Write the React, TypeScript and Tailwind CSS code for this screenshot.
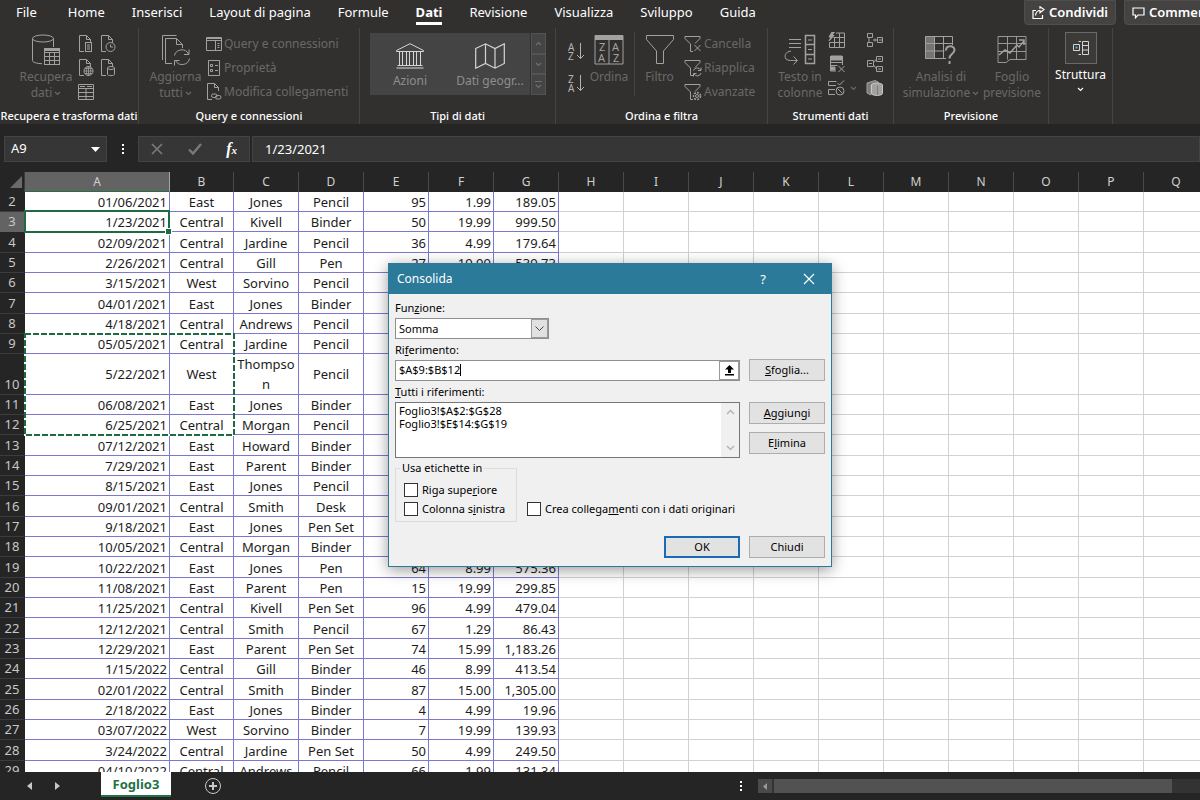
import { ReactNode } from 'react';
import clsx from 'clsx';

const TABS = ['File', 'Home', 'Inserisci', 'Layout di pagina', 'Formule', 'Dati', 'Revisione', 'Visualizza', 'Sviluppo', 'Guida'];

const COLUMNS = 'ABCDEFGHIJKLMNOPQ'.split('');
const EMPTY_COLUMNS = COLUMNS.slice(7);

const ROWS: string[][] = [
  ['01/06/2021', 'East', 'Jones', 'Pencil', '95', '1.99', '189.05'],
  ['1/23/2021', 'Central', 'Kivell', 'Binder', '50', '19.99', '999.50'],
  ['02/09/2021', 'Central', 'Jardine', 'Pencil', '36', '4.99', '179.64'],
  ['2/26/2021', 'Central', 'Gill', 'Pen', '27', '19.99', '539.73'],
  ['3/15/2021', 'West', 'Sorvino', 'Pencil', '56', '2.99', '167.44'],
  ['04/01/2021', 'East', 'Jones', 'Binder', '60', '4.99', '299.40'],
  ['4/18/2021', 'Central', 'Andrews', 'Pencil', '75', '1.99', '149.25'],
  ['05/05/2021', 'Central', 'Jardine', 'Pencil', '90', '4.99', '449.10'],
  ['5/22/2021', 'West', 'Thompson', 'Pencil', '32', '1.99', '63.68'],
  ['06/08/2021', 'East', 'Jones', 'Binder', '60', '8.99', '539.40'],
  ['6/25/2021', 'Central', 'Morgan', 'Pencil', '90', '4.99', '449.10'],
  ['07/12/2021', 'East', 'Howard', 'Binder', '29', '1.99', '57.71'],
  ['7/29/2021', 'East', 'Parent', 'Binder', '81', '19.99', '1,619.19'],
  ['8/15/2021', 'East', 'Jones', 'Pencil', '35', '4.99', '174.65'],
  ['09/01/2021', 'Central', 'Smith', 'Desk', '2', '125.00', '250.00'],
  ['9/18/2021', 'East', 'Jones', 'Pen Set', '16', '15.99', '255.84'],
  ['10/05/2021', 'Central', 'Morgan', 'Binder', '28', '8.99', '251.72'],
  ['10/22/2021', 'East', 'Jones', 'Pen', '64', '8.99', '575.36'],
  ['11/08/2021', 'East', 'Parent', 'Pen', '15', '19.99', '299.85'],
  ['11/25/2021', 'Central', 'Kivell', 'Pen Set', '96', '4.99', '479.04'],
  ['12/12/2021', 'Central', 'Smith', 'Pencil', '67', '1.29', '86.43'],
  ['12/29/2021', 'East', 'Parent', 'Pen Set', '74', '15.99', '1,183.26'],
  ['1/15/2022', 'Central', 'Gill', 'Binder', '46', '8.99', '413.54'],
  ['02/01/2022', 'Central', 'Smith', 'Binder', '87', '15.00', '1,305.00'],
  ['2/18/2022', 'East', 'Jones', 'Binder', '4', '4.99', '19.96'],
  ['03/07/2022', 'West', 'Sorvino', 'Binder', '7', '19.99', '139.93'],
  ['3/24/2022', 'Central', 'Jardine', 'Pen Set', '50', '4.99', '249.50'],
  ['04/10/2022', 'Central', 'Andrews', 'Pencil', '66', '1.99', '131.34'],
];

/* ---------- icons ---------- */

function Icon({ w, h, className, children }: { w: number; h: number; className?: string; children: ReactNode }) {
  return (
    <svg width={w} height={h} viewBox={`0 0 ${w} ${h}`} fill="none" stroke="currentColor" className={clsx('shrink-0', className)} aria-hidden="true">
      {children}
    </svg>
  );
}

const DatabaseIcon = () => (
  <Icon w={28} h={32}>
    <ellipse cx="11" cy="4.5" rx="10.5" ry="3.5" />
    <path d="M.5 4.5v22c0 1.800 4 3 9.500 3.200M21.500 4.500V13" />
    <rect x="12.500" y="14.500" width="15" height="16" fill="#31302f" />
    <path d="M12.500 18.500h15M12.500 22.500h15M12.500 26.500h15M17.500 18v12.500M22.500 18v12.500" />
    <path d="M12.500 16h15" strokeWidth="2" />
  </Icon>
);

function DocIcon({ children }: { children?: ReactNode }) {
  return (
    <Icon w={16} h={18}>
      <path d="M6 16.500H1.500V.500h7l4 4V8M8.500.500v4h4" />
      {children}
    </Icon>
  );
}

const DocTextIcon = () => (
  <DocIcon>
    <rect x="7.500" y="7.500" width="6" height="9" fill="#31302f" />
    <path d="M9 10h3M9 12h3M9 14h3" />
  </DocIcon>
);
const DocClockIcon = () => (
  <DocIcon>
    <circle cx="10.500" cy="12" r="4.500" fill="#31302f" />
    <path d="M10.500 9.500V12h2.500" />
  </DocIcon>
);
const DocGlobeIcon = () => (
  <DocIcon>
    <circle cx="10.500" cy="12" r="4.500" fill="#31302f" />
    <path d="M6 12h9M10.500 7.500v9M7 9.500h7M7 14.500h7" strokeWidth=".8" />
    <ellipse cx="10.500" cy="12" rx="2.200" ry="4.500" strokeWidth=".8" />
  </DocIcon>
);
const DocDbIcon = () => (
  <DocIcon>
    <path d="M7.500 9v6.500c0 1.500 7 1.500 7 0V9" fill="#31302f" />
    <ellipse cx="11" cy="9" rx="3.500" ry="1.500" fill="#31302f" />
  </DocIcon>
);
const DocLinkIcon = () => (
  <DocIcon>
    <rect x="5.500" y="11" width="5.500" height="3.500" rx="1.700" fill="#31302f" />
    <rect x="9.500" y="12.500" width="5.500" height="3.500" rx="1.700" />
  </DocIcon>
);
const TableIcon = () => (
  <Icon w={16} h={16}>
    <path d="M.500.500h15v15H.500zM.500 4.500h15M.500 8.500h15M.500 12.500h15M8 4.500v11" />
    <path d="M2 2.500h5M9 2.500h5" />
  </Icon>
);
const RefreshAllIcon = () => (
  <Icon w={28} h={32}>
    <path d="M.500 26V1.500h14" />
    <path d="M10 29.500H3.500V4.500h11l6 6V14M14.500 4.500v6h6" />
    <path d="M12.500 21.500a7.500 7.500 0 0 1 14-1.500M27.500 24.500a7.500 7.500 0 0 1-14 2M27 15.500v5h-5M12.500 31.500v-5h5" />
  </Icon>
);
const QueryPaneIcon = () => (
  <Icon w={16} h={16}>
    <path d="M.500 1.500h15v13H.500zM.500 4.500h15M9.500 4.500v10" />
    <path d="M.500 2.500h15M11.500 7.500h2M11.500 9.500h2M11.500 11.500h2" />
  </Icon>
);
const PropertiesIcon = () => (
  <Icon w={16} h={16}>
    <path d="M2.500.500h11v15h-11z" />
    <path d="M4.500 4.500h2v2h-2zM4.500 9.500h2v2h-2zM9 5.500h3M9 10.500h3" />
  </Icon>
);
const BankIcon = () => (
  <Icon w={28} h={26}>
    <path d="M.500 7.500 14 .700l13.500 6.800v1h-27zM1.500 22.500h25M.500 25h27" />
    <path d="M3.500 9v13.500M6.500 9v13.500M10.500 9v13.500M13.500 9v13.500M17.500 9v13.500M20.500 9v13.500M24.500 9v13.500" />
  </Icon>
);
const MapIcon = () => (
  <Icon w={30} h={26}>
    <path d="M.700 5.500 10.500.800l9.500 4.700 9.300-4.700v19.700L20 25.200l-9.500-4.700-9.800 4.700zM10.500.800v19.700M20 5.500v19.700" strokeWidth="1.200" />
  </Icon>
);

function SortIcon({ first, last }: { first: string; last: string }) {
  return (
    <Icon w={18} h={24}>
      <text x="1" y="11" fontSize="10" fill="currentColor" stroke="none">{first}</text>
      <text x="1" y="20" fontSize="10" fill="currentColor" stroke="none">{last}</text>
      <path d="M13.500 3v15.500M10 15l3.500 3.500L17 15" />
    </Icon>
  );
}

const SortDialogIcon = () => (
  <Icon w={30} h={30}>
    <path d="M1 .500h28v28.500H1zM15 5v24" />
    <path d="M1 3h28" strokeWidth="4" />
    <g fill="currentColor" stroke="none" fontSize="11">
      <text x="5" y="16">Z</text>
      <text x="4" y="27">A</text>
      <text x="18" y="16">A</text>
      <text x="19" y="27">Z</text>
    </g>
  </Icon>
);
const FunnelIcon = () => (
  <Icon w={30} h={32}>
    <path d="M1.500 1.500h27v4L18.500 17v12.500h-7V17L1.500 5.500z" />
  </Icon>
);

function SmallFunnelIcon({ children }: { children: ReactNode }) {
  return (
    <Icon w={18} h={18}>
      <path d="M9 16.500H6.500V9L1 3.500v-2h15v2L11 8.500" />
      {children}
    </Icon>
  );
}

const TextToColumnsIcon = () => (
  <Icon w={32} h={32}>
    <path d="M5 5.500h12M5 9.500h12M5 13.500h12M7 17c-6 1-7 5-5 8 2 2 6 1.500 11 1.500M9.500 22.500l4 4-4 4" />
    <path d="M21.500 1.500h9v28h-9zM21.500 10.500h9M21.500 20.500h9" strokeWidth="1.500" />
    <path d="M24 6h4M24 15.500h4M24 25h4" />
  </Icon>
);
const FlashFillIcon = () => (
  <Icon w={18} h={16}>
    <path d="M5.500 5.500h11v10h-15v-5h15M6.500 5v10.500M11.500 1v14.500M8 1h8.500v5" />
    <path d="M4 0 1 5h2L1 9l5-5.500H4L6.500 0z" fill="currentColor" />
  </Icon>
);
const DuplicatesIcon = () => (
  <Icon w={18} h={18}>
    <path d="M3 1h11v4H3zM3 12h4v3H3z" fill="currentColor" />
    <path d="M2.500 1v15H8M14.500 1v9M2.500 7.500h12M2.500 10.500h7M10.500 11l6 6M16.500 11l-6 6" />
  </Icon>
);
const ValidationIcon = () => (
  <Icon w={18} h={16}>
    <path d="M8.500 1.500h-8v4H8M7 9.500H.500v5H7M9.500 3l2 2 4.500-4.500" />
    <circle cx="12" cy="11" r="4" />
    <path d="M9.500 8.500l5 5" />
  </Icon>
);
const ConsolidateIcon = () => (
  <Icon w={18} h={16}>
    <path d="M1.500 1.500h5v4h-5zM1.500 10.500h5v4h-5zM11.500 5.500h5v5h-5zM13 8h3M7 8h4M9 6.500v3M3 5.500v5" />
  </Icon>
);
const RelationsIcon = () => (
  <Icon w={18} h={18}>
    <path d="M1.500 5.500h6v6h-6zM10.500 1.500h6v5h-6zM10.500 11.500h6v5h-6zM7.500 7.500 10.500 4M7.500 10l3 4M3 8.500h3M12 4h3M12 14h3" />
  </Icon>
);
const DataModelIcon = () => (
  <Icon w={18} h={18}>
    <path d="M1 4v10l4 2V6L13 3.500 9 1.500 1 4z" fill="#7d7b79" />
    <path d="M5.500 6c0-2.500 11-2.500 11 0v8.500c0 2.500-11 2.500-11 0z" fill="currentColor" stroke="#c9c7c5" />
    <path d="M11.500 7v9" stroke="#7d7b79" />
  </Icon>
);
const WhatIfIcon = () => (
  <Icon w={34} h={32}>
    <path d="M1 2.500h10v22H1z" fill="currentColor" stroke="none" opacity=".6" />
    <path d="M22 24.500H1.500v-22h27V11M1.500 9.500h27M1.500 17h19M10.500 2.500v22M19.500 2.500v22" />
    <path d="M22 16.500c0-5.500 8.500-5.500 8.500-.5 0 4-5 3.500-5 8.500M25.500 27v3" strokeWidth="2" />
  </Icon>
);
const ForecastIcon = () => (
  <Icon w={30} h={30}>
    <path d="M1 1.500h28v23H13l-4 3H1zM1 8.500h28M1 16.500h28M10.500 1.500v23M19.500 1.500v23" strokeWidth=".9" />
    <path d="M2 20l6-5 5 3 7-8 2 2 5-6M22 5h5v5" strokeWidth="1.500" />
  </Icon>
);
const OutlineIcon = () => (
  <Icon w={18} h={16}>
    <path d="M10.500 1.500h6v13h-6zM10.500 5.500h6M10.500 10h6" />
    <path d="M1.500 4.500h6v6h-6z" />
    <path d="M3.500 7.500h2" stroke="#4cb0e8" strokeWidth="2" />
    <path d="M9 1.500H6.500M9 14.500H6.500" />
  </Icon>
);
const ShareIcon = () => (
  <Icon w={13} h={13}>
    <path d="M4 4.500H1v8h9.500V9M3.500 9.500C4 6 5.500 4.500 8 4.500V6.800L12 3.500 8 .700v2" strokeWidth="1.200" />
  </Icon>
);
const CommentIcon = () => (
  <Icon w={13} h={12}>
    <path d="M1 1h11v7H6L3.500 10.800V8H1z" strokeWidth="1.200" />
  </Icon>
);

function Chevron({ className }: { className?: string }) {
  return (
    <svg width="7" height="5" viewBox="0 0 7 5" fill="none" stroke="currentColor" className={clsx('inline-block', className)} aria-hidden="true">
      <path d="M1 1l2.500 2.500L6 1" strokeWidth="1.200" />
    </svg>
  );
}

/* ---------- ribbon ---------- */

function Group({ label, className, children }: { label?: string; className: string; children: ReactNode }) {
  return (
    <section className={clsx('flex shrink-0 flex-col justify-between border-r border-[#454443]', className)}>
      <div className="flex items-start pt-1">{children}</div>
      <h2 className="h-4 text-center text-[11px] leading-4 font-medium whitespace-nowrap text-white">{label}</h2>
    </section>
  );
}

function BigButton({ icon, lines, menu, className }: { icon: ReactNode; lines: string[]; menu?: boolean; className?: string }) {
  return (
    <button className={clsx('flex shrink-0 flex-col items-center gap-[3px] pt-0.5 text-[#6b6967]', className)}>
      <span className="flex h-8 items-center text-[#a3a19f]">{icon}</span>
      <span className="text-xs leading-4 whitespace-nowrap">
        {lines.map((line, i) => (
          <span key={line} className="block">
            {line}
            {menu && i === lines.length - 1 && <Chevron className="ml-0.5" />}
          </span>
        ))}
      </span>
    </button>
  );
}

function SmallButton({ icon, label }: { icon: ReactNode; label: string }) {
  return (
    <button className="flex h-6 items-center gap-0.5 text-xs whitespace-nowrap text-[#6b6967]">
      <span className="text-[#a3a19f]">{icon}</span>
      {label}
    </button>
  );
}

function IconButton({ label, children }: { label: string; children: ReactNode }) {
  return (
    <button aria-label={label} className="flex h-6 items-center text-[#a3a19f]">
      {children}
    </button>
  );
}

function Ribbon() {
  return (
    <header className="shrink-0 bg-[#31302f]">
      <div className="flex h-7 items-start">
        <nav className="flex min-w-0 flex-1 gap-[27px] pl-4 text-[13px] leading-[25px] text-white">
          {TABS.map((tab) => (
            <a
              key={tab}
              href="#"
              className={clsx('h-[25px] whitespace-nowrap', tab === 'Dati' && 'border-b-3 border-white font-bold', tab === 'File' && 'mr-1')}
            >
              {tab}
            </a>
          ))}
        </nav>
        <div className="flex w-44 shrink-0 gap-2 overflow-hidden text-[13px] font-semibold text-white">
          <button className="flex h-[25px] shrink-0 items-center gap-1 rounded-b-sm border border-[#4f4e4d] bg-[#444342] px-[7px]">
            <ShareIcon />
            Condividi
          </button>
          <button className="flex h-[25px] shrink-0 items-center gap-1 rounded-b-sm border border-[#4f4e4d] bg-[#444342] px-[7px]">
            <CommentIcon />
            Commenti
          </button>
        </div>
      </div>

      <div className="flex h-[98px] overflow-hidden border-b-2 border-[#262524]">
        <Group label="Recupera e trasforma dati" className="w-[139px]">
          <BigButton className="ml-3.5 w-16" icon={<DatabaseIcon />} lines={['Recupera', 'dati']} menu />
          <div className="grid grid-cols-2 gap-x-1.5">
            <IconButton label="Da testo/CSV"><DocTextIcon /></IconButton>
            <IconButton label="Origini recenti"><DocClockIcon /></IconButton>
            <IconButton label="Da Web"><DocGlobeIcon /></IconButton>
            <IconButton label="Connessioni esistenti"><DocDbIcon /></IconButton>
            <IconButton label="Da tabella"><TableIcon /></IconButton>
          </div>
        </Group>

        <Group label="Query e connessioni" className="w-[221px]">
          <BigButton className="ml-1.5 w-[61px]" icon={<RefreshAllIcon />} lines={['Aggiorna', 'tutti']} menu />
          <div>
            <SmallButton icon={<QueryPaneIcon />} label="Query e connessioni" />
            <SmallButton icon={<PropertiesIcon />} label="Proprietà" />
            <SmallButton icon={<DocLinkIcon />} label="Modifica collegamenti" />
          </div>
        </Group>

        <Group label="Tipi di dati" className="w-[196px]">
          <div className="mt-px ml-2.5 flex h-[62px] w-[176px] bg-[#444444] text-xs text-[#8f8e8d]">
            <button className="flex flex-1 flex-col items-center justify-end gap-1 pb-1.5">
              <span className="text-[#d6d5d4]"><BankIcon /></span>
              <span className="leading-4">Azioni</span>
            </button>
            <button className="flex flex-1 flex-col items-center justify-end gap-1 pb-1.5 whitespace-nowrap">
              <span className="text-[#d6d5d4]"><MapIcon /></span>
              <span className="leading-4">Dati geogr...</span>
            </button>
            <div className="flex w-4 flex-col border-l border-[#31302f] text-[#6f6e6d]">
              <button aria-label="Su" className="flex flex-1 items-center justify-center border border-[#555453]"><Chevron className="rotate-180" /></button>
              <button aria-label="Giù" className="flex flex-1 items-center justify-center border border-[#555453]"><Chevron /></button>
              <button aria-label="Altro" className="flex flex-1 flex-col items-center justify-center gap-0.5 border border-[#555453]">
                <span className="w-[7px] border-t border-current" />
                <Chevron />
              </button>
            </div>
          </div>
        </Group>

        <Group label="Ordina e filtra" className="w-[212px]">
          <div className="ml-[11px] flex w-[21px] flex-col gap-2 pt-2 text-[#b5b3b1]">
            <button aria-label="Ordina dalla A alla Z"><SortIcon first="A" last="Z" /></button>
            <button aria-label="Ordina dalla Z alla A"><SortIcon first="Z" last="A" /></button>
          </div>
          <BigButton className="w-[42px]" icon={<SortDialogIcon />} lines={['Ordina']} />
          <div className="ml-1 h-16 border-r border-[#454443]" />
          <BigButton className="w-[49px]" icon={<FunnelIcon />} lines={['Filtro']} />
          <div>
            <SmallButton icon={<SmallFunnelIcon><path d="M10.500 10l6 6M16.500 10l-6 6" /></SmallFunnelIcon>} label="Cancella" />
            <SmallButton
              icon={<SmallFunnelIcon><path d="M9.500 11.500a3.800 3.800 0 0 1 7-.500M17 14a3.800 3.800 0 0 1-7 1M17 8.500V11.500h-3M9.500 17.500v-3h3" /></SmallFunnelIcon>}
              label="Riapplica"
            />
            <SmallButton
              icon={
                <SmallFunnelIcon>
                  <circle cx="13" cy="13" r="1.500" />
                  <circle cx="13" cy="13" r="3.500" strokeWidth="1.500" strokeDasharray="2 1.200" />
                </SmallFunnelIcon>
              }
              label="Avanzate"
            />
          </div>
        </Group>

        <Group label="Strumenti dati" className="w-[126px]">
          <BigButton className="ml-[7px] w-[50px]" icon={<TextToColumnsIcon />} lines={['Testo in', 'colonne']} />
          <div className="-mt-1 ml-[3px] grid grid-cols-[38px_18px]">
            <IconButton label="Anteprima suggerimenti"><FlashFillIcon /></IconButton>
            <IconButton label="Consolida"><ConsolidateIcon /></IconButton>
            <IconButton label="Rimuovi duplicati"><DuplicatesIcon /></IconButton>
            <IconButton label="Relazioni"><RelationsIcon /></IconButton>
            <IconButton label="Convalida dati"><ValidationIcon /><Chevron className="ml-1 text-[#6b6967]" /></IconButton>
            <IconButton label="Gestisci modello di dati"><DataModelIcon /></IconButton>
          </div>
        </Group>

        <Group label="Previsione" className="w-[155px]">
          <BigButton className="ml-2 w-[78px]" icon={<WhatIfIcon />} lines={['Analisi di', 'simulazione']} menu />
          <BigButton className="w-16" icon={<ForecastIcon />} lines={['Foglio', 'previsione']} />
        </Group>

        <Group className="w-16">
          <button className="flex w-full flex-col items-center text-xs leading-4 text-white">
            <span className="flex size-8 items-center justify-center border border-[#6b6967] bg-[#3b3a39] text-[#d6d5d4]"><OutlineIcon /></span>
            <span className="mt-[3px]">Struttura</span>
            <Chevron className="mt-1" />
          </button>
        </Group>
      </div>
    </header>
  );
}

/* ---------- formula bar ---------- */

function FormulaBar() {
  return (
    <div className="flex h-[46px] shrink-0 items-center bg-[#252525] pl-1 text-white">
      <div className="flex h-[26px] w-[103px] items-center border border-[#434343] bg-[#363636] px-1.5">
        <input aria-label="Casella nome" defaultValue="A9" className="w-0 flex-1 text-[13px] outline-none" />
        <button aria-label="Elenco nomi">
          <svg width="9" height="5" viewBox="0 0 9 5" fill="currentColor"><path d="M0 0h9L4.500 5z" /></svg>
        </button>
      </div>
      <div className="flex w-[31px] flex-col items-center gap-0.5">
        <span className="size-0.5 bg-white" />
        <span className="size-0.5 bg-white" />
        <span className="size-0.5 bg-white" />
      </div>
      <div className="flex h-[26px] w-28 items-center justify-between border border-[#434343] bg-[#363636] px-3 text-[#7a7a7a]">
        <button aria-label="Annulla">
          <svg width="12" height="12" viewBox="0 0 12 12" stroke="currentColor" strokeWidth="1.600"><path d="M1 1l10 10M11 1L1 11" /></svg>
        </button>
        <button aria-label="Invio">
          <svg width="14" height="12" viewBox="0 0 14 12" fill="none" stroke="currentColor" strokeWidth="2.400"><path d="M1 6.500l4 4L13 1" /></svg>
        </button>
        <button aria-label="Inserisci funzione" className="font-['Liberation_Serif',serif] text-base leading-5 font-bold text-white italic">
          f<span className="text-[11px]">x</span>
        </button>
      </div>
      <input
        aria-label="Barra della formula"
        defaultValue="1/23/2021"
        className="ml-0.5 h-[26px] min-w-0 flex-1 border border-[#434343] bg-[#363636] px-3 text-[13px] outline-none"
      />
    </div>
  );
}

/* ---------- worksheet ---------- */

function Sheet() {
  return (
    <main className="relative min-h-0 flex-1 overflow-hidden bg-white">
      <table className="w-full min-w-[1209px] table-fixed border-separate border-spacing-0 text-[13px] leading-5 text-[#1c1c1c]">
        <colgroup>
          <col className="w-[25px]" />
          <col className="w-[145px]" />
          <col className="w-16" />
          {COLUMNS.slice(2, -1).map((c) => (
            <col key={c} className="w-[65px]" />
          ))}
          <col />
        </colgroup>
        <thead>
          <tr className="h-5 bg-[#252525] text-xs text-[#d0d0d0]">
            <th className="border-r border-[#3c3c3c] p-0">
              <svg width="12" height="12" viewBox="0 0 12 12" className="mr-0.5 ml-auto"><path d="M12 0v12H0z" fill="#6a6a6a" /></svg>
            </th>
            {COLUMNS.map((c) => (
              <th
                key={c}
                scope="col"
                className={clsx('border-r p-0 font-normal', c === 'A' ? 'border-b border-r-[#a5a5a5] border-b-[#217346] bg-[#636363]' : 'border-[#4a4a4a]')}
              >
                {c}
              </th>
            ))}
          </tr>
        </thead>
        <tbody>
          {ROWS.map((row, r) => {
            const n = r + 2;
            return (
              <tr key={n} className={n === 10 ? 'h-[41px]' : 'h-5 nth-[3n]:h-[21px]'}>
                <th
                  scope="row"
                  className={clsx('border-r border-b p-0 align-bottom font-normal text-[#c8c8c8]', n === 3 ? 'border-[#636363] bg-[#636363]' : 'border-r-[#252525] border-b-[#3c3c3c] bg-[#252525]')}
                >
                  <div className="h-[19px] leading-[19px]">{n}</div>
                </th>
                {row.map((value, c) => (
                  <td
                    key={c}
                    className={clsx('border-r border-b border-[#7c78cf] px-0.5 py-0 wrap-anywhere', c === 0 || c > 3 ? 'text-right' : 'text-center')}
                  >
                    {n === 3 && c === 0 ? (
                      <div className="relative h-[19px]">
                        {value}
                        <span className="absolute -inset-x-[3px] -top-0.5 -bottom-0.5 border-2 border-[#1e6b42]" />
                        <span className="absolute -right-1 -bottom-[3px] size-[5px] bg-[#1e6b42] outline outline-white" />
                      </div>
                    ) : (
                      <div className={n === 10 ? undefined : 'h-[19px]'}>{value}</div>
                    )}
                  </td>
                ))}
                {EMPTY_COLUMNS.map((c) => (
                  <td key={c} className="border-r border-b border-[#d2d2d2] p-0" />
                ))}
              </tr>
            );
          })}
        </tbody>
      </table>

      {/* copied range A9:B12 */}
      <svg width="211" height="103" className="absolute top-[161px] left-6" fill="none" aria-hidden="true">
        <rect x="1" y="1" width="209" height="101" stroke="#fff" strokeWidth="2" />
        <rect x="1" y="1" width="209" height="101" stroke="#1e6b42" strokeWidth="2" strokeDasharray="6 2" />
      </svg>
    </main>
  );
}

function SheetTabs() {
  return (
    <footer className="flex h-7 shrink-0 items-start bg-[#252525] text-[#c8c8c8]">
      <div className="flex h-7 w-[101px] items-center gap-[23px] pl-[27px]">
        <button aria-label="Foglio precedente">
          <svg width="5" height="8" viewBox="0 0 5 8" fill="currentColor"><path d="M5 0v8L0 4z" /></svg>
        </button>
        <button aria-label="Foglio successivo">
          <svg width="5" height="8" viewBox="0 0 5 8" fill="currentColor"><path d="M0 0v8l5-4z" /></svg>
        </button>
      </div>
      <button className="h-[25px] w-[70px] border-b-2 border-[#217346] bg-white pt-0.5 text-[13px] font-bold text-[#217346]">Foglio3</button>
      <button aria-label="Nuovo foglio" className="ml-[33px] flex h-7 items-center">
        <svg width="18" height="18" viewBox="0 0 18 18" fill="none" stroke="currentColor"><circle cx="9" cy="9" r="7.500" /><path d="M9 5v8M5 9h8" strokeWidth="2" /></svg>
      </button>
      <div className="ml-auto flex h-7 w-[460px] items-center">
        <div className="flex w-[18px] flex-col gap-0.5">
          <span className="size-0.5 bg-white" />
          <span className="size-0.5 bg-white" />
          <span className="size-0.5 bg-white" />
        </div>
        <div className="flex h-3.5 flex-1 gap-0.5 bg-[#333333]">
          <button aria-label="Scorri a sinistra" className="flex w-3.5 items-center justify-center bg-[#4a4a4a] text-[#999]">
            <svg width="4" height="7" viewBox="0 0 4 7" fill="currentColor"><path d="M4 0v7L0 3.500z" /></svg>
          </button>
          <div className="mr-7 flex-1 bg-[#525252]" />
        </div>
      </div>
    </footer>
  );
}

/* ---------- Consolida dialog ---------- */

function DialogButton({ primary, children }: { primary?: boolean; children: ReactNode }) {
  return (
    <button className={clsx('h-[22px] w-[76px] shrink-0 bg-[#e2e2e2]', primary ? 'border-2 border-[#1a6ab5]' : 'border border-[#adadad]')}>
      {children}
    </button>
  );
}

function Check({ id, children }: { id: string; children: ReactNode }) {
  return (
    <div className="flex h-[19px] items-center gap-1">
      <input id={id} type="checkbox" className="size-3.5 shrink-0 appearance-none border border-[#333] bg-white" />
      <label htmlFor={id} className="whitespace-nowrap">{children}</label>
    </div>
  );
}

function ConsolidaDialog() {
  return (
    <div
      role="dialog"
      aria-labelledby="dialog-title"
      className="absolute top-[263px] left-[388px] w-[444px] border border-[#2b7a99] bg-[#f0f0f0] text-[11px] leading-4 text-black shadow-[0_3px_14px_rgba(0,0,0,0.4)]"
    >
      <div className="flex h-[30px] items-center bg-[#2b7a99] pr-4 pl-2 text-white">
        <h1 id="dialog-title" className="flex-1 text-xs">Consolida</h1>
        <button aria-label="Guida" className="w-4 text-[13px]">?</button>
        <button aria-label="Chiudi" className="ml-8">
          <svg width="12" height="12" viewBox="0 0 12 12" stroke="currentColor" strokeWidth="1.200"><path d="M1 1l10 10M11 1L1 11" /></svg>
        </button>
      </div>

      <div className="px-1.5 pt-1.5 pb-2">
        <label htmlFor="funzione" className="block">Fun<u>z</u>ione:</label>
        <div className="relative mt-0.5 h-[21px] w-[154px]">
          <select id="funzione" className="size-full appearance-none border border-[#8f8f8f] bg-white px-[3px]">
            <option>Somma</option>
          </select>
          <span className="pointer-events-none absolute inset-y-px right-px flex w-[17px] items-center justify-center border border-[#9a9a9a] bg-[#e1e1e1]">
            <svg width="9" height="6" viewBox="0 0 9 6" fill="none" stroke="#444"><path d="M.500.500l4 4 4-4" /></svg>
          </span>
        </div>

        <label htmlFor="riferimento" className="mt-[3px] block">Ri<u>f</u>erimento:</label>
        <div className="mt-px flex items-center gap-[9px]">
          <div className="flex h-[21px] flex-1 items-center border border-[#8f8f8f] bg-white">
            <div className="flex flex-1 items-center pl-[3px]">
              <input id="riferimento" defaultValue="$A$9:$B$12" className="field-sizing-content outline-none" />
              <span className="h-3 border-l border-black" />
            </div>
            <button aria-label="Comprimi finestra" className="flex h-full w-5 items-center justify-center border border-[#9a9a9a]">
              <svg width="9" height="11" viewBox="0 0 9 11"><path d="M4.500 0l4.500 4.500H6V8H3V4.500H0zM0 9h9v1.500H0z" /></svg>
            </button>
          </div>
          <DialogButton><u>S</u>foglia...</DialogButton>
        </div>

        <label htmlFor="riferimenti" className="mt-[3px] block"><u>T</u>utti i riferimenti:</label>
        <div className="mt-0.5 flex gap-[9px]">
          <div className="flex h-14 flex-1 border border-[#767676] bg-white">
            <select id="riferimenti" size={4} className="min-w-0 flex-1 appearance-none overflow-hidden px-0.5 leading-[13px] outline-none">
              <option className="h-[13px] min-h-0 p-0 pl-px leading-[13px]">Foglio3!$A$2:$G$28</option>
              <option className="h-[13px] min-h-0 p-0 pl-px leading-[13px]">Foglio3!$E$14:$G$19</option>
            </select>
            <div className="flex w-[18px] flex-col items-center justify-between bg-[#f0f0f0] py-1.5">
              <svg width="9" height="6" viewBox="0 0 9 6" fill="none" stroke="#b5b5b5" strokeWidth="1.500"><path d="M1 5l3.500-3.500L8 5" /></svg>
              <svg width="9" height="6" viewBox="0 0 9 6" fill="none" stroke="#b5b5b5" strokeWidth="1.500"><path d="M1 1l3.500 3.500L8 1" /></svg>
            </div>
          </div>
          <div className="flex flex-col gap-2">
            <DialogButton><u>A</u>ggiungi</DialogButton>
            <DialogButton>E<u>l</u>imina</DialogButton>
          </div>
        </div>

        <div className="mt-0.5 flex items-end gap-2.5">
          <fieldset className="w-[122px] border border-[#dcdcdc] px-2 pt-1 pb-[3px]">
            <legend className="-ml-1 px-0.5">Usa etichette in</legend>
            <Check id="riga">Riga supe<u>r</u>iore</Check>
            <Check id="colonna">Colonna s<u>i</u>nistra</Check>
          </fieldset>
          <div className="pb-1">
            <Check id="collegamenti">Crea collega<u>m</u>enti con i dati originari</Check>
          </div>
        </div>

        <div className="mt-3.5 flex justify-end gap-[9px]">
          <DialogButton primary>OK</DialogButton>
          <DialogButton>Chiudi</DialogButton>
        </div>
      </div>
    </div>
  );
}

export default function App() {
  return (
    <div className="relative flex h-screen flex-col overflow-hidden bg-[#252525] font-['Noto_Sans','Open_Sans',sans-serif]">
      <Ribbon />
      <FormulaBar />
      <Sheet />
      <SheetTabs />
      <ConsolidaDialog />
    </div>
  );
}
